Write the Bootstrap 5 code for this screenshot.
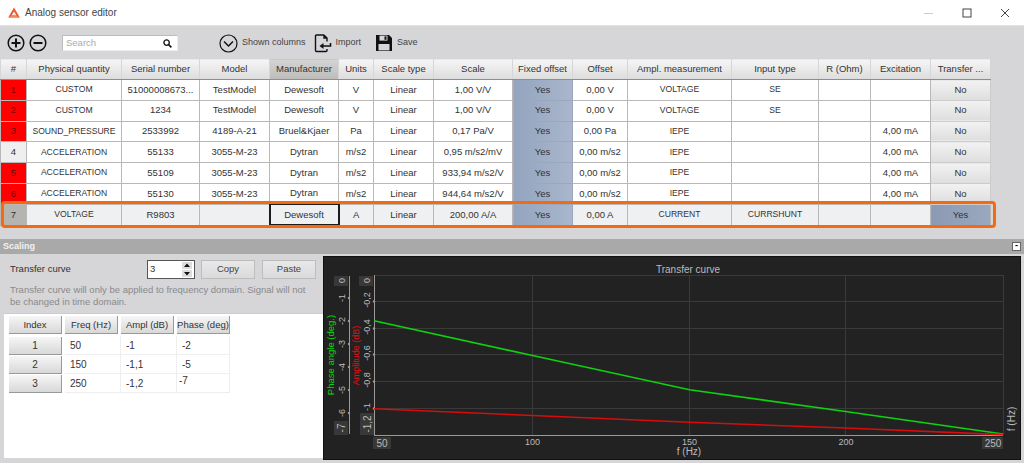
<!DOCTYPE html>
<html lang="en">
<head>
<meta charset="utf-8">
<title>Analog sensor editor</title>
<link href="https://cdn.jsdelivr.net/npm/bootstrap@5.3.0/dist/css/bootstrap.min.css" rel="stylesheet">
<style>
html,body{height:463px;overflow:hidden}
body{width:1024px;background:#d6d5d8;font-family:"Liberation Sans",sans-serif;font-size:9.5px;color:#333;line-height:1.1}
.winbar{height:26px;background:#fff;border-bottom:1px solid #e2e2e2;padding-left:8px;font-size:10px;color:#444}
.wintitle{margin-left:5px}
.winctl{margin-left:auto;gap:28px;padding-right:14px}
.toolbar{height:32px;padding:2px 0 0 7px}
.toolbtn{gap:4px;color:#444;font-size:9px}
.savebtn{margin-left:14px}
.searchbox{width:116px;height:16px;margin-left:15px;margin-right:41px;background:#fff;border:1px solid #bbb;border-right-color:#eee;border-bottom-color:#eee;padding:0 5px 0 3px;color:#aaa}
.sensorwrap{width:991px;position:relative}
.sensors{table-layout:fixed;width:990px;margin:0;border-collapse:collapse;--bs-table-bg:transparent;--bs-table-color:#333}
.sensors th,.sensors td{padding:0;text-align:center;vertical-align:middle;font-weight:400;white-space:nowrap;overflow:hidden;border:1px solid #b9b8b6;color:#333;font-size:9.5px}
.sensors td.caps{font-size:8.6px}
.sensors th{height:21px;background:linear-gradient(#f6f6f6,#dcdcdc);border-color:#d6d5d8;border-bottom:1px solid #8e8e8e}
.sensors th.sorted{background:linear-gradient(#d4d4d4,#bdbcba)}
.sensors td{height:20.8px;background:#fff}
.sensors td.bad{background:#f00;color:#700}
.sensors td.idx{background:#efefef}
.sensors td.fixed{background:linear-gradient(90deg,#93a4be,#a9b6cc);border-color:#9aa8bd}
.sensors td.tno{background:linear-gradient(#f2f2f2,#dedede);border-color:#ccc}
.sensors tr.current td{background:#eff0f2;height:21px}
.sensors tr.current td.idx{background:#b5b4b0}
.sensors tr.current td.fixed{background:linear-gradient(90deg,#93a4be,#a9b6cc)}
.sensors tr.current td.tyes{background:linear-gradient(90deg,#8b9ab3,#9aa8be)}
.sensors tr.current td.mfr{border:2px solid #1c1c1c}
.rowmark{position:absolute;left:1px;top:143px;width:995px;height:27px;border:3px solid #f36a10;border-radius:4px;pointer-events:none}
.scalehead{margin-top:13px;height:15px;background:#a9a9a9;color:#f2f2f2;padding:0 3px;font-weight:700;font-size:9px}
.collapsebtn{width:9px;height:9px;background:#fff;border:1px solid #666;color:#000;line-height:5px;text-align:center;font-size:9px;font-weight:700}
.lower{height:206px;padding:2px 3px 2px 0}
.leftpane{flex:none;width:323px}
.curvebar{height:22px;padding:2px 7px 0 10px;margin-top:1px}
.spin{width:48px;height:19px;background:#fff;border:1px solid #555;margin-left:auto;margin-right:6px;padding-left:2px}
.spinarrows{margin-left:auto;gap:1px;padding-right:2px}
.flatbtn{width:54px;height:19px;background:linear-gradient(#e8e8e8,#dadada);border:1px solid #bdbdbd;color:#444;font-size:9.5px;padding:0;border-radius:0}
.flatbtn+.flatbtn{margin-left:7px}
.hint{color:#8a8a8a;margin:5px 5px 0 10px;line-height:12px;height:29px}
.pointsbox{flex:1;background:#fff;margin-left:4px;padding:2px 0 0 5px;border-top:1px solid #ccc}
.points{table-layout:fixed;width:221px;margin:0;border-collapse:separate;border-spacing:0;--bs-table-bg:transparent}
.points th,.points td{padding:0;height:19px;font-weight:400;font-size:10px;color:#333;vertical-align:middle;border:0;white-space:nowrap}
.points th{text-align:center;height:20px;vertical-align:top;font-size:9.5px}
.points td{border-right:1px solid #eee;border-bottom:1px solid #eee;padding-left:5px}
.points td.shifted{padding-left:2px;padding-bottom:5px}
.points .gridbtn{display:block;height:18px;line-height:17px;background:linear-gradient(#f6f6f6,#d8d8d8);border-right:1px solid #999;border-bottom:1px solid #999;margin-right:3px;text-align:center}
.points th:last-child .gridbtn{margin-right:0}
.points th.rowhead,.points td.rowhead{padding:0;border:0}
.plotbox{flex:none;width:698px;height:204px;background:#222}
.plotbox svg{display:block}
.plotbox text{font-family:"Liberation Sans",sans-serif;font-size:10px;fill:#bbb}
.plotbox text.tick{font-size:9px}
.plotbox text.phaselabel{font-size:9.5px;fill:#0fd20f}
.plotbox text.amplabel{font-size:9px;fill:#e01010}
</style>
</head>
<body>
<div class="winbar d-flex align-items-center">
  <svg width="12" height="11" viewBox="0 0 12 11"><path d="M6 0.5 11.8 10.5H0.2Z" fill="#ee5a2c"/><path d="M6 4.5 8.4 8.6H3.6Z" fill="#fff"/><path d="M0.5 10.5 6 7.6 11.5 10.5Z" fill="#f58a5c"/></svg>
  <span class="wintitle">Analog sensor editor</span>
  <div class="winctl d-flex align-items-center">
    <svg width="10" height="10"><path d="M0 5.5H9" stroke="#ccc"/></svg>
    <svg width="10" height="10"><rect x="1" y="1" width="8" height="8" fill="none" stroke="#444"/></svg>
    <svg width="10" height="10"><path d="M1 1 9 9M9 1 1 9" stroke="#444"/></svg>
  </div>
</div>
<div class="toolbar d-flex align-items-center">
  <svg width="18" height="18" viewBox="0 0 18 18"><circle cx="9" cy="9" r="7.8" fill="none" stroke="#111" stroke-width="1.5"/><path d="M4.5 9H13.5M9 4.5V13.5" stroke="#111" stroke-width="2"/></svg>
  <svg class="ms-1" width="18" height="18" viewBox="0 0 18 18"><circle cx="9" cy="9" r="7.8" fill="none" stroke="#111" stroke-width="1.5"/><path d="M4.5 9H13.5" stroke="#111" stroke-width="2"/></svg>
  <div class="searchbox d-flex align-items-center justify-content-between"><span>Search</span>
    <svg width="9" height="9" viewBox="0 0 9 9"><circle cx="3.6" cy="3.6" r="2.7" fill="none" stroke="#111" stroke-width="1.3"/><path d="M5.6 5.6 8.4 8.4" stroke="#111" stroke-width="1.6"/></svg></div>
  <div class="toolbtn d-flex align-items-center">
    <svg width="19" height="19" viewBox="0 0 19 19"><circle cx="9.5" cy="9.5" r="8.5" fill="none" stroke="#111" stroke-width="1.2"/><path d="M5 7.5 9.5 12 14 7.5" fill="none" stroke="#111" stroke-width="1.5"/></svg>
    <span>Shown columns</span>
  </div>
  <div class="toolbtn d-flex align-items-center ms-2">
    <svg width="18" height="19" viewBox="0 0 18 19"><path d="M10 1H2.5Q1.5 1 1.5 2V16.5Q1.5 17.5 2.5 17.5H12Q13 17.5 13 16.5V15M10 1 13 4V7.5M10 1V4H13" fill="none" stroke="#111" stroke-width="1.4"/><path d="M16.5 9V12H9" fill="none" stroke="#111" stroke-width="1.6"/><path d="M5.5 12 9.5 9V15Z" fill="#111"/></svg>
    <span>Import</span>
  </div>
  <div class="toolbtn savebtn d-flex align-items-center">
    <svg width="18" height="18" viewBox="0 0 18 18"><path d="M1 1H14L17 4V17H1Z" fill="#111"/><rect x="4.5" y="1.6" width="8" height="5" fill="#d6d5d8"/><rect x="9.5" y="2.4" width="2" height="3.4" fill="#111"/><rect x="3.5" y="10" width="11" height="6.4" fill="#d6d5d8"/></svg>
    <span>Save</span>
  </div>
</div>
<div class="sensorwrap">
<table class="table sensors">
  <colgroup><col style="width:26px"><col style="width:95px"><col style="width:78px"><col style="width:70px"><col style="width:69px"><col style="width:35px"><col style="width:60px"><col style="width:79px"><col style="width:60px"><col style="width:55px"><col style="width:104px"><col style="width:87px"><col style="width:52px"><col style="width:60px"><col style="width:60px"></colgroup>
  <thead><tr><th>#</th><th>Physical quantity</th><th>Serial number</th><th>Model</th><th class="sorted">Manufacturer</th><th>Units</th><th>Scale type</th><th>Scale</th><th>Fixed offset</th><th>Offset</th><th>Ampl. measurement</th><th>Input type</th><th>R (Ohm)</th><th>Excitation</th><th>Transfer ...</th></tr></thead>
  <tbody>
  <tr><td class="bad">1</td><td class="caps">CUSTOM</td><td>51000008673...</td><td>TestModel</td><td>Dewesoft</td><td>V</td><td>Linear</td><td>1,00 V/V</td><td class="fixed">Yes</td><td>0,00 V</td><td class="caps">VOLTAGE</td><td class="caps">SE</td><td></td><td></td><td class="tno">No</td></tr>
  <tr><td class="bad">2</td><td class="caps">CUSTOM</td><td>1234</td><td>TestModel</td><td>Dewesoft</td><td>V</td><td>Linear</td><td>1,00 V/V</td><td class="fixed">Yes</td><td>0,00 V</td><td class="caps">VOLTAGE</td><td class="caps">SE</td><td></td><td></td><td class="tno">No</td></tr>
  <tr><td class="bad">3</td><td class="caps">SOUND_PRESSURE</td><td>2533992</td><td>4189-A-21</td><td>Bruel&amp;Kjaer</td><td>Pa</td><td>Linear</td><td>0,17 Pa/V</td><td class="fixed">Yes</td><td>0,00 Pa</td><td class="caps">IEPE</td><td></td><td></td><td>4,00 mA</td><td class="tno">No</td></tr>
  <tr><td class="idx">4</td><td class="caps">ACCELERATION</td><td>55133</td><td>3055-M-23</td><td>Dytran</td><td>m/s2</td><td>Linear</td><td>0,95 m/s2/mV</td><td class="fixed">Yes</td><td>0,00 m/s2</td><td class="caps">IEPE</td><td></td><td></td><td>4,00 mA</td><td class="tno">No</td></tr>
  <tr><td class="bad">5</td><td class="caps">ACCELERATION</td><td>55109</td><td>3055-M-23</td><td>Dytran</td><td>m/s2</td><td>Linear</td><td>933,94 m/s2/V</td><td class="fixed">Yes</td><td>0,00 m/s2</td><td class="caps">IEPE</td><td></td><td></td><td>4,00 mA</td><td class="tno">No</td></tr>
  <tr><td class="bad">6</td><td class="caps">ACCELERATION</td><td>55130</td><td>3055-M-23</td><td>Dytran</td><td>m/s2</td><td>Linear</td><td>944,64 m/s2/V</td><td class="fixed">Yes</td><td>0,00 m/s2</td><td class="caps">IEPE</td><td></td><td></td><td>4,00 mA</td><td class="tno">No</td></tr>
  <tr class="current"><td class="idx">7</td><td class="caps">VOLTAGE</td><td>R9803</td><td></td><td class="mfr">Dewesoft</td><td>A</td><td>Linear</td><td>200,00 A/A</td><td class="fixed">Yes</td><td>0,00 A</td><td class="caps">CURRENT</td><td class="caps">CURRSHUNT</td><td></td><td></td><td class="tyes">Yes</td></tr>
  </tbody>
</table>
<div class="rowmark"></div>
</div>
<div class="scalehead d-flex align-items-center justify-content-between"><span>Scaling</span><div class="collapsebtn">-</div></div>
<div class="lower d-flex">
  <div class="leftpane d-flex flex-column">
    <div class="curvebar d-flex align-items-center">
      <span>Transfer curve</span>
      <div class="spin d-flex align-items-center"><span>3</span>
        <div class="spinarrows d-flex flex-column">
          <svg width="10" height="7"><rect width="10" height="7" fill="#ddd"/><path d="M5 1.5 8 5H2Z" fill="#111"/></svg>
          <svg width="10" height="7"><rect width="10" height="7" fill="#ddd"/><path d="M5 5.5 8 2H2Z" fill="#111"/></svg>
        </div>
      </div>
      <button class="btn flatbtn" type="button">Copy</button><button class="btn flatbtn" type="button">Paste</button>
    </div>
    <div class="hint">Transfer curve will only be applied to frequency domain. Signal will not be changed in time domain.</div>
    <div class="pointsbox">
      <table class="table points">
        <colgroup><col style="width:56px"><col style="width:56px"><col style="width:56px"><col style="width:53px"></colgroup>
        <thead><tr><th class="rowhead"><span class="gridbtn">Index</span></th><th class="rowhead"><span class="gridbtn">Freq (Hz)</span></th><th class="rowhead"><span class="gridbtn">Ampl (dB)</span></th><th class="rowhead"><span class="gridbtn">Phase (deg)</span></th></tr></thead>
        <tbody>
          <tr><td class="rowhead"><span class="gridbtn">1</span></td><td>50</td><td>-1</td><td>-2</td></tr>
          <tr><td class="rowhead"><span class="gridbtn">2</span></td><td>150</td><td>-1,1</td><td>-5</td></tr>
          <tr><td class="rowhead"><span class="gridbtn">3</span></td><td>250</td><td>-1,2</td><td class="shifted">-7</td></tr>
        </tbody>
      </table>
    </div>
  </div>
  <div class="plotbox">
    <svg width="698" height="204" viewBox="323 257 698 204">
      <rect x="323" y="257" width="698" height="204" fill="#222"/>
      <rect x="323.5" y="257.5" width="697" height="203" fill="none" stroke="#111"/>
      <text x="688" y="274" text-anchor="middle">Transfer curve</text>
      <g stroke="#3a3a3a" stroke-width="1" fill="none">
        <path d="M374 276.5H1003.5M374 302.5H1003.5M374 329.5H1003.5M374 355.5H1003.5M374 382.5H1003.5M374 409.5H1003.5"/>
        <path d="M532.5 276V436M689.5 276V436M845.5 276V436M1003.5 276V436"/>
      </g>
      <g stroke="#9a9a9a" fill="none"><path d="M374.5 276V437M349.5 277V435M374 436.5H1003"/></g>
      <g fill="#9a9a9a"><circle cx="349" cy="299" r="1.2"/><circle cx="349" cy="322" r="1.2"/><circle cx="349" cy="345" r="1.2"/><circle cx="349" cy="368" r="1.2"/><circle cx="349" cy="391" r="1.2"/><circle cx="349" cy="414" r="1.2"/><circle cx="374" cy="302.5" r="1.2"/><circle cx="374" cy="329.5" r="1.2"/><circle cx="374" cy="355.5" r="1.2"/><circle cx="374" cy="382.5" r="1.2"/><circle cx="374" cy="409.5" r="1.2"/></g>
      <g fill="#383838"><rect x="334" y="277" width="14" height="10"/><rect x="359" y="277" width="14" height="10"/><rect x="334" y="422" width="14" height="14"/><rect x="360" y="414" width="14" height="22"/><rect x="373" y="438" width="18" height="12"/><rect x="982" y="438" width="21" height="12"/></g>
      <path d="M374 321.7 532.5 356.5 689.5 390.7 845.5 412.5 1003 435" fill="none" stroke="#0fd20f" stroke-width="1.6"/>
      <path d="M374 409.7 532.5 416.5 689.5 423.3 845.5 429 1003 435.6" fill="none" stroke="#d80c0c" stroke-width="1.6"/>
      <g text-anchor="middle">
        <text class="tick" transform="translate(345 281.5) rotate(-90)">0</text>
        <text class="tick" transform="translate(345 299) rotate(-90)">-1</text>
        <text class="tick" transform="translate(345 322) rotate(-90)">-2</text>
        <text class="tick" transform="translate(345 345) rotate(-90)">-3</text>
        <text class="tick" transform="translate(345 368) rotate(-90)">-4</text>
        <text class="tick" transform="translate(345 391) rotate(-90)">-5</text>
        <text class="tick" transform="translate(345 414) rotate(-90)">-6</text>
        <text transform="translate(345 429) rotate(-90)">-7</text>
        <text class="tick" transform="translate(370 281.5) rotate(-90)">0</text>
        <text class="tick" transform="translate(370 301) rotate(-90)">-0,2</text>
        <text class="tick" transform="translate(370 328) rotate(-90)">-0,4</text>
        <text class="tick" transform="translate(370 354) rotate(-90)">-0,6</text>
        <text class="tick" transform="translate(370 381) rotate(-90)">-0,8</text>
        <text class="tick" transform="translate(370 408) rotate(-90)">-1</text>
        <text transform="translate(371 425) rotate(-90)">-1,2</text>
        <text x="382" y="448">50</text>
        <text class="tick" x="532.5" y="446">100</text>
        <text class="tick" x="689.5" y="446">150</text>
        <text class="tick" x="846" y="446">200</text>
        <text x="993" y="448">250</text>
        <text x="689" y="456">f (Hz)</text>
        <text transform="translate(1015 420) rotate(-90)">f (Hz)</text>
        <text class="phaselabel" transform="translate(334 356) rotate(-90)">Phase angle (deg.)</text>
        <text class="amplabel" transform="translate(359 356.5) rotate(-90)">Amplitude (dB)</text>
      </g>
    </svg>
  </div>
</div>
<script src="https://cdn.jsdelivr.net/npm/bootstrap@5.3.0/dist/js/bootstrap.bundle.min.js"></script>
</body>
</html>
